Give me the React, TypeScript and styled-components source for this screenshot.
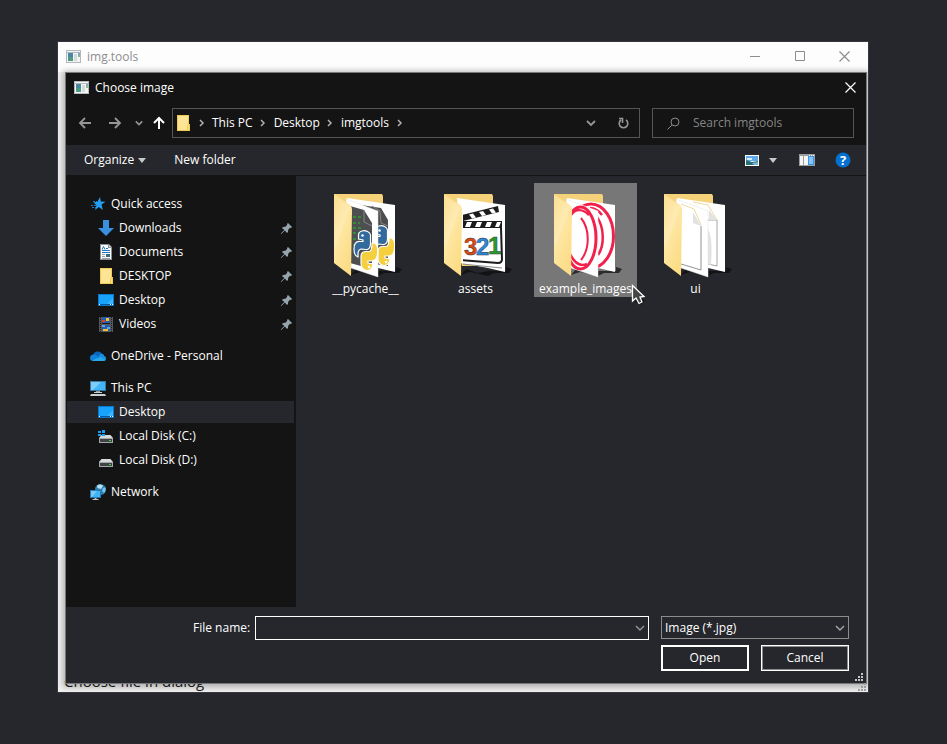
import React from "react";
import styled, { createGlobalStyle } from "styled-components";

const Global = createGlobalStyle`
  * { box-sizing: border-box; }
  body { margin: 0; background: #26272c; }
  body, button, input, select {
    font-family: "Open Sans", "Noto Sans", sans-serif;
    font-size: 12px;
    line-height: 16px;
  }
`;

const Page = styled.main`
  display: flex;
  min-height: 100vh;
  padding: 42px 79px 52px 58px;
`;

const Window = styled.section`
  position: relative;
  display: flex;
  flex-direction: column;
  flex: 1;
  min-width: 0;
  background: #f0f0f0;
  outline: 1px solid #393642;
  overflow: hidden;
`;

const WindowBar = styled.header`
  display: flex;
  align-items: flex-start;
  height: 30px;
  padding: 0 1px 0 8px;
  background: #fdfdfd;
  color: #8d8d8d;
  > svg { display: block; margin-top: 8px; }
`;

const WindowTitle = styled.h1`
  flex: 1;
  margin: 0 0 0 6px;
  font-size: 12px;
  line-height: 30px;
  font-weight: 400;
`;

const CaptionButton = styled.button`
  display: grid;
  place-items: center;
  width: 45px;
  height: 28px;
  padding: 0;
  border: 0;
  background: none;
  color: inherit;
`;

const WindowBody = styled.div`
  display: flex;
  flex: 1;
  align-items: flex-end;
  padding: 0 6px 1px;
  color: #1b1b1b;
  p { margin: 0; font-size: 15px; line-height: 20px; }
`;

const WindowGrip = styled.span`
  position: absolute;
  right: 2px;
  bottom: 1px;
  color: #9c9c9c;
  svg { display: block; }
`;

const Dialog = styled.div`
  position: absolute;
  inset: 30px 1px 8px 7px;
  display: flex;
  flex-direction: column;
  border: 1px solid #77787a;
  background: #26272c;
  color: #fff;
  box-shadow: 0 1px 6px 2px rgba(0, 0, 0, 0.28);
`;

const DialogBar = styled.header`
  display: flex;
  align-items: center;
  height: 29px;
  padding: 0 1px 0 8px;
  background: #141414;
  h2 { flex: 1; margin: 0 0 0 6px; font-size: 12px; font-weight: 400; }
  svg { display: block; }
`;

const CloseButton = styled(CaptionButton)`
  width: 30px;
`;

const NavBar = styled.div`
  display: flex;
  align-items: center;
  height: 43px;
  padding: 0 12px 1px 11px;
  background: #141414;
`;

const NavButton = styled.button<{ $width: number; $before?: number; $color?: string }>`
  display: grid;
  place-items: center;
  place-content: center;
  flex: none;
  width: ${(p) => p.$width}px;
  height: 28px;
  margin-left: ${(p) => p.$before ?? 0}px;
  padding: 0;
  border: 0;
  background: none;
  color: ${(p) => p.$color ?? "#969696"};
`;

const Address = styled.nav`
  display: flex;
  align-items: center;
  flex: 1;
  height: 30px;
  margin: 0 12px 0 1px;
  padding-left: 2px;
  border: 1px solid #555;
`;

const Crumb = styled.button`
  padding: 0;
  border: 0;
  background: none;
  color: #fff;
  white-space: nowrap;
`;

const CrumbArrow = styled.span`
  display: grid;
  place-items: center;
  width: 21px;
  color: #b0b0b0;
`;

const Spacer = styled.span`
  flex: 1;
`;

const Search = styled.label`
  display: flex;
  align-items: center;
  gap: 13px;
  flex: none;
  width: 202px;
  height: 30px;
  padding-left: 14px;
  border: 1px solid #555;
  color: #8a8a8a;
  input {
    flex: 1;
    min-width: 0;
    padding: 0;
    border: 0;
    outline: 0;
    background: none;
    color: #fff;
  }
  input::placeholder { color: #858585; opacity: 1; }
`;

const Toolbar = styled.div`
  display: flex;
  align-items: center;
  height: 31px;
  padding: 0 15px 0 18px;
  border-bottom: 1px solid #141414;
`;

const ToolButton = styled.button<{ $gap?: number }>`
  display: flex;
  align-items: center;
  gap: 4px;
  margin-left: ${(p) => p.$gap ?? 0}px;
  padding: 0;
  border: 0;
  background: none;
  color: #fff;
  svg { display: block; }
`;

const Content = styled.div`
  display: flex;
  flex: 1;
  min-height: 0;
`;

const Sidebar = styled.nav`
  display: flex;
  flex-direction: column;
  gap: 10px;
  flex: none;
  width: 230px;
  padding: 17px 2px 0 1px;
  background: #141414;
`;

const Group = styled.div`
  display: flex;
  flex-direction: column;
  gap: 2px;
`;

const Place = styled.button<{ $nested?: boolean; $active?: boolean }>`
  display: flex;
  align-items: center;
  height: 22px;
  padding: 0 2px 0 ${(p) => (p.$nested ? 31 : 23)}px;
  border: 0;
  background: ${(p) => (p.$active ? "#26272c" : "none")};
  color: #fff;
  text-align: left;
  svg { display: block; flex: none; }
  span { flex: 1; margin-left: 5px; }
`;

const Files = styled.div`
  display: flex;
  flex-wrap: wrap;
  align-content: flex-start;
  gap: 7px;
  flex: 1;
  padding: 7px 18px;
`;

const Tile = styled.button<{ $active?: boolean }>`
  position: relative;
  display: flex;
  flex-direction: column;
  align-items: center;
  width: 103px;
  height: 114px;
  padding: 10px 0 0;
  border: 0;
  background: ${(p) => (p.$active ? "#777777" : "none")};
  color: #fff;
  > svg { display: block; margin: 0 0 2px 4px; }
`;

const Cursor = styled.span`
  position: absolute;
  left: 97px;
  top: 101px;
  svg { display: block; }
`;

const Footer = styled.footer`
  position: relative;
  display: flex;
  flex-direction: column;
  gap: 5px;
  height: 76px;
  padding: 9px 17px 0 127px;
`;

const FooterRow = styled.div`
  display: flex;
  justify-content: flex-end;
  gap: 12px;
`;

const FileName = styled.label`
  display: flex;
  align-items: center;
  flex: 1;
  gap: 5px;
  white-space: nowrap;
`;

const FieldBox = styled.span<{ $color: string }>`
  display: flex;
  align-items: center;
  flex: 1;
  height: 24px;
  border: 1px solid ${(p) => p.$color};
  color: #a8a8a8;
  input {
    flex: 1;
    min-width: 0;
    border: 0;
    outline: 0;
    background: none;
    color: #fff;
  }
`;

const TypeBox = styled.span`
  display: grid;
  align-items: center;
  flex: none;
  width: 188px;
  height: 23px;
  border: 1px solid #8c8c8c;
  color: #a8a8a8;
  select {
    grid-area: 1 / 1;
    width: 100%;
    padding: 0 20px 0 3px;
    border: 0;
    outline: 0;
    appearance: none;
    background: none;
    color: #fff;
  }
  svg { grid-area: 1 / 1; justify-self: end; margin-right: 3px; pointer-events: none; }
`;

const ActionButton = styled.button<{ $primary?: boolean }>`
  width: 88px;
  height: 26px;
  padding: 0;
  border: ${(p) => (p.$primary ? "2px solid #fff" : "1px solid #fff")};
  box-shadow: ${(p) => (p.$primary ? "none" : "inset 0 0 0 1px #8c8c8c")};
  background: #26272c;
  color: #fff;
`;

const Grip = styled.span`
  position: absolute;
  right: 3px;
  bottom: 2px;
  color: #c4c4c4;
  svg { display: block; }
`;

const AppIcon = () => (
  <svg width="15" height="13" viewBox="0 0 15 13">
    <path fill="#b5b9bd" d="M0 0h15v13H0z" />
    <path fill="#f3f5f5" d="M1 1h13v1H1zM1 3h13v9H1z" />
    <path fill="#4a87a5" d="M2 3h5v4H2z" />
    <path fill="#4d9b83" d="M2 7h5v4H2z" />
    <path fill="#d7dadd" d="M8 4h3v7H8z" />
    <path fill="#7fa7cf" d="M12 3h2v2h-2z" />
    <path fill="#86bb9a" d="M12 5h2v2h-2z" />
  </svg>
);

const Cross = () => (
  <svg width="11" height="11" viewBox="0 0 11 11" fill="none" stroke="currentColor" strokeWidth="1.200">
    <path d="M.5.5l10 10M10.5.5l-10 10" />
  </svg>
);

const Chevron = ({ size = 10, weight = 1.4 }: { size?: number; weight?: number }) => (
  <svg width={size} height={size} viewBox="0 0 10 10" fill="none" stroke="currentColor" strokeWidth={weight}>
    <path d="M1 3l4 4 4-4" />
  </svg>
);

const Arrow = ({ d, strokeWidth = 1.8 }: { d: string; strokeWidth?: number }) => (
  <svg width="14" height="14" viewBox="0 0 14 14" fill="none" stroke="currentColor" strokeWidth={strokeWidth}>
    <path d={d} />
  </svg>
);

const Separator = () => (
  <CrumbArrow>
    <svg width="6" height="8" viewBox="0 0 6 8" fill="none" stroke="currentColor" strokeWidth="1.5">
      <path d="M1 1l3 3-3 3" />
    </svg>
  </CrumbArrow>
);

const Triangle = () => (
  <svg width="8" height="5" viewBox="0 0 8 5">
    <path fill="#c8c8c8" d="M0 0h8L4 5z" />
  </svg>
);

const GripDots = () => (
  <svg width="8" height="8" viewBox="0 0 8 8" fill="currentColor">
    <path d="M6 0h2v2H6zM3 3h2v2H3zM6 3h2v2H6zM0 6h2v2H0zM3 6h2v2H3zM6 6h2v2H6z" />
  </svg>
);

const SmallFolder = () => (
  <svg width="16" height="16" viewBox="0 0 16 16">
    <path fill="#f0cb52" d="M2 0h12v9h1v7H2z" />
    <path fill="#ffe496" d="M3 1h10v9h-1v5H3z" />
    <path fill="#ffdc70" d="M13 10h1v5h-1z" />
  </svg>
);

const Pin = () => (
  <svg width="11" height="11" viewBox="0 0 11 11">
    <path fill="#94a3ac" d="M7 0l4 4-1 1-1-.2L7.200 6.700 7 9 6 10 3.800 7.600.6 10.800 0 10.900l.1-.6 3.200-3.200L1 5l1-1 2.300-.2L6.200 2 6 1z" />
  </svg>
);

const QuickIcon = () => (
  <svg width="16" height="14" viewBox="0 0 16 14">
    <path fill="#23a0f5" d="M10 0l.8 4.500 4.700.2-3.900 2.900 1.200 5.400-4-3L5 13l1.500-4.800L3.500 5.500l4-.8z" />
    <path stroke="#1477c4" strokeDasharray="2 1" d="M3 4.500h4M1 8.500h5M2 10.500h4" />
  </svg>
);

const DownIcon = () => (
  <svg width="16" height="16" viewBox="0 0 16 16">
    <path fill="#3a90df" d="M5 0h6v8h5l-8 8-8-8h5z" />
  </svg>
);

const DocIcon = () => (
  <svg width="16" height="16" viewBox="0 0 16 16">
    <path fill="#8c9196" d="M2 0h9l3 3v13H2z" />
    <path fill="#fbfbfb" d="M3 1h7v3h3v11H3z" />
    <path fill="#d5d8da" d="M11 1l2 2h-2z" />
    <path fill="none" stroke="#2277bd" d="M4 5.500l1.500-3L7 5.500M8 4.500h2M4 6.500h8M4 8.500h8" />
    <path fill="#346d84" d="M8 10h4v3H8z" />
    <path stroke="#9aa0a5" d="M4 10.500h3M4 12.500h3M4 14.500h8" />
  </svg>
);

const DesktopIcon = () => (
  <svg width="16" height="14" viewBox="0 0 16 14">
    <path fill="#0b78cc" d="M0 1h16v12H0z" />
    <path fill="#17a3fb" d="M1 2h14v9H1z" />
    <path fill="#3fb4fc" d="M15 5v6H9z" />
    <path fill="#07579a" d="M1 11h14v1H1z" />
    <path fill="#eef8ff" d="M1 11h1v1H1zM12 11h1v1h-1zM14 11h1v1h-1z" />
  </svg>
);

const VideoIcon = () => (
  <svg width="16" height="16" viewBox="0 0 16 16">
    <path fill="#57595c" d="M1 1h14v15H1z" />
    <path stroke="#1b1b1b" strokeWidth="1" strokeDasharray="1 1" d="M2.500 1v15M13.500 1v15" />
    <path fill="#2b5aa8" d="M4 1h8v6H4zM4 9h8v6H4z" />
    <path fill="#f2c22d" d="M8 2h3v3H8zM5 13h5v2H5z" />
    <path fill="#d4452f" d="M4 4h3v2H4z" />
    <path fill="#58a8f0" d="M4 9h3v2H4zM9 11h3v2H9z" />
    <path fill="#1b1b1b" d="M4 7h8v1H4z" />
  </svg>
);

const CloudIcon = () => (
  <svg width="16" height="12" viewBox="0 0 16 12">
    <path fill="#0a66b8" d="M3 5a5 4.500 0 0 1 9-1.500L10 9H2z" />
    <path fill="#0f83da" d="M0 8a3.500 3.500 0 0 1 4-3.500c4 0 4 4 6 4l-7 2.500A3 3 0 0 1 0 8z" />
    <path fill="#1490df" d="M9 6c1-3 5-3 5 0 2 .2 2.500 2 1.800 3.500L9 8z" />
    <path fill="#28a8ea" d="M2 10.500L9.500 7l6.300 2.500c-.4 1-1.300 1.500-2.300 1.500H3.500z" />
  </svg>
);

const PcIcon = () => (
  <svg width="16" height="15" viewBox="0 0 16 15">
    <path fill="#3779a8" d="M0 0h16v10H0z" />
    <path fill="#43b5f7" d="M1 1h14v8H1z" />
    <path fill="#7dcdfb" d="M1 1h10L3 9H1z" />
    <path fill="#8d9ba4" d="M6 10h4v1H6z" />
    <path fill="#c9d0d4" d="M4 11h8v1H4zM1 13h14l1 2H0z" />
  </svg>
);

const DiskIcon = ({ system }: { system?: boolean }) => (
  <svg width="16" height="14" viewBox="0 0 16 14">
    <path fill="#d8dadb" d="M3.500 6h9L15 9H1z" />
    <path fill="#a6a9ab" d="M1 9h14v5H1z" />
    <path fill="#404244" d="M2 10h12v3H2z" />
    <path fill="#3fd24c" d="M11 11h2v1h-2z" />
    {system && <path fill="#18a0f4" d="M0 2h3v2H0zM4 1h3v3H4zM0 5h3v2H0zM4 5h3v2H4z" />}
  </svg>
);

const NetworkIcon = () => (
  <svg width="16" height="16" viewBox="0 0 16 16">
    <circle cx="10.500" cy="5.500" r="5.500" fill="#2f7fae" />
    <path fill="#b9e0f2" d="M7 1.500c2-1.500 5-1 6 .5L11 5 7.500 4z" />
    <path fill="#7cc2e6" d="M13 4l2.500-.5c.5 2 0 4-1.500 5.500L12 7z" />
    <path fill="#237cba" d="M0 6h11v8H0z" />
    <path fill="#42b3f5" d="M1 7h9v6H1z" />
    <path fill="#79cafa" d="M1 7h6l-5 6H1z" />
    <path fill="#b8c2c8" d="M4.500 14h2v1h2v1h-6v-1h2z" />
  </svg>
);

type Art = "python" | "clapper" | "rings" | "pages";

const PythonMark = () => (
  <g stroke="#fff" strokeWidth="1.200">
    <path fill="#326a9c" d="M8 0c4-1 8 1 8.500 4v9c0 4-2 6-5 5.500L8 18c-3 0-4 2-4 5v3c-4-1-4-5-4-8 0-5 2-8 6-7.500h3V9L4.500 8V4c0-2 1.500-3.500 3.500-4z" />
    <path fill="#f6cf3e" d="M18 12h2c4 1 4 6 3.500 11s-3 7-6 7H14v2l5 1c0 4-3 7-6 6.500-4-.5-6-3-6-7v-7c0-3 2-5 5-5h3c2 0 3-3 3-8.500z" />
    <circle cx="8.500" cy="4.500" r="1.300" fill="#fff" stroke="none" />
    <circle cx="15" cy="36" r="1.300" fill="#fff" stroke="none" />
  </g>
);

const FolderArt = ({ art }: { art: Art }) => {
  const id = `folder-${art}`;
  return (
    <svg width="72" height="86" viewBox="0 0 72 86">
      <defs>
        <linearGradient id={`${id}-flap`} x1="0" y1="0" x2="0.600" y2="1">
          <stop offset="0" stopColor="#fbd878" />
          <stop offset="0.500" stopColor="#fee7a4" />
          <stop offset="1" stopColor="#fcdc85" />
        </linearGradient>
        <clipPath id={`${id}-back`}>
          <path d="M21 6l42 6v67l-17-4-25-2z" />
        </clipPath>
        <clipPath id={`${id}-front`}>
          <path d="M14 6l32 12v66l-27-9z" />
        </clipPath>
      </defs>
      <path fill="#0b0b0d" opacity=".7" d="M19 82l5-6 12 4 10-2 18 0 0-4 6 2-3 4-15 0-6 3-18-4z" />
      <path fill="#f5d27a" d="M2 1h48l1 2v70H20z" />
      <path fill="#fff" d="M15 5l48 7v67l-17-4-27-5z" />
      {art === "clapper" ? (
        <g>
          <g clipPath={`url(#${id}-back)`}>
            <path fill="#fff" stroke="#1c1c1c" strokeWidth="2" d="M19 32h38q2 0 2 3l1 31q0 4-4 4l-37-3z" />
            <path fill="#1c1c1c" d="M19 28h41v7H19zM20 22l36-9 1 6-36 9z" />
            <path fill="#fff" d="M25 29h5l-2 5h-5zM35 29h5l-2 5h-5zM45 29h5l-2 5h-5zM55 29h4l-2 5h-4zM27 21.500l4-1 3 4-4 1zM37 19l4-1 3 4-4 1zM47 16.500l4-1 3 4-4 1z" />
            <g fontFamily="Liberation Sans Narrow, Liberation Sans, sans-serif" fontWeight="700" fontSize="24" stroke="#333" strokeWidth=".4">
              <text x="22" y="62" fill="#de4b12">3</text>
              <text x="34" y="62" fill="#2b88df">2</text>
              <text x="46" y="61" fill="#289a2b">1</text>
            </g>
            <path stroke="#888" d="M20 71l40 4" />
          </g>
        </g>
      ) : (
        <>
          <g clipPath={`url(#${id}-back)`}>
            {art === "python" && (
              <>
                <path fill="#4d4e50" d="M29 12l20 3 7 12v46l-14-2z" />
                <path fill="none" stroke="#858585" d="M40 13l8 5 1 12 7 3" />
                <g transform="translate(39 33)"><PythonMark /></g>
              </>
            )}
            {art === "rings" && (
              <>
                <ellipse cx="39" cy="43" rx="22.500" ry="32" fill="none" stroke="#f1214c" strokeWidth="3" />
                <path fill="none" stroke="#f1214c" strokeWidth="2.500" d="M38 15c5 0 9 3 12 7M45 24c7 10 8 28 1 38" />
              </>
            )}
            {art === "pages" && (
              <>
                <path fill="none" stroke="#8f8f8f" strokeWidth=".8" d="M46 27h9v46l-9-2" />
                <path fill="none" stroke="#f0d8a0" d="M31 9l15 3 9 15" />
                <path fill="#e2e2e2" d="M47 17l8 10h-8zM46 36c4 8 4 20 3 36l-3-1z" />
              </>
            )}
          </g>
          <path fill="#fff" stroke="#e0e0e0" strokeWidth=".5" d="M14 6l32 12v66l-27-9z" />
          <g clipPath={`url(#${id}-front)`}>
            {art === "python" && (
              <>
                <path fill="#4d4e50" d="M18 13l14 4 8 13v46l-22-6z" />
                <path fill="none" stroke="#858585" d="M32 17v12l8 4" />
                <path stroke="#2ca12f" strokeWidth="1.500" strokeDasharray="3 2" d="M21 24h9M21 30h7M21 35h9M21 40h6M21 46h5M21 52h4" />
              </>
            )}
            {art === "rings" && (
              <>
                <ellipse cx="28.500" cy="45" rx="15.500" ry="31" fill="none" stroke="#f1214c" strokeWidth="3" />
                <path fill="none" stroke="#f1214c" strokeWidth="2" d="M29 25c9 11 9 31 0 42" />
                <path fill="none" stroke="#f1214c" strokeWidth="2.500" d="M19 22c5-7 12-6 18 0M18 61c4 8 10 13 17 10" />
              </>
            )}
            {art === "pages" && (
              <>
                <path fill="none" stroke="#777" strokeWidth=".8" d="M39 33v44l-20-6" />
                <path fill="none" stroke="#f0d8a0" d="M19 11l13 5 7 16" />
                <path fill="#e2e2e2" d="M31 19l8 14-8-3z" />
              </>
            )}
          </g>
          {art === "python" && <g transform="translate(22 38)"><PythonMark /></g>}
        </>
      )}
      <path fill={`url(#${id}-flap)`} d="M2 1l16 11q2 2 2 4l-1 67L2 70z" />
      <path fill="#fff" opacity=".18" d="M2 1l16 13L4 52l-2 1z" />
    </svg>
  );
};

const Pointer = () => (
  <svg width="18" height="23" viewBox="0 0 18 23">
    <path fill="#111" opacity=".8" d="M4 6l10 11-4 4-3-4-3 2z" />
    <path fill="#444" stroke="#fff" strokeWidth="1.300" d="M1.500 1.500v15.500l3.500-3 3 5.500 3-1.500-2-5 4-.5z" />
  </svg>
);

type PlaceItem = { name: string; icon: React.ReactNode; nested?: boolean; pinned?: boolean; active?: boolean };

const places: PlaceItem[][] = [
  [
    { name: "Quick access", icon: <QuickIcon /> },
    { name: "Downloads", icon: <DownIcon />, nested: true, pinned: true },
    { name: "Documents", icon: <DocIcon />, nested: true, pinned: true },
    { name: "DESKTOP", icon: <SmallFolder />, nested: true, pinned: true },
    { name: "Desktop", icon: <DesktopIcon />, nested: true, pinned: true },
    { name: "Videos", icon: <VideoIcon />, nested: true, pinned: true },
  ],
  [{ name: "OneDrive - Personal", icon: <CloudIcon /> }],
  [
    { name: "This PC", icon: <PcIcon /> },
    { name: "Desktop", icon: <DesktopIcon />, nested: true, active: true },
    { name: "Local Disk (C:)", icon: <DiskIcon system />, nested: true },
    { name: "Local Disk (D:)", icon: <DiskIcon />, nested: true },
  ],
  [{ name: "Network", icon: <NetworkIcon /> }],
];

const folders: { name: string; art: Art; active?: boolean }[] = [
  { name: "__pycache__", art: "python" },
  { name: "assets", art: "clapper" },
  { name: "example_images", art: "rings", active: true },
  { name: "ui", art: "pages" },
];

export default function App() {
  return (
    <Page>
      <Global />
      <Window>
        <WindowBar>
          <AppIcon />
          <WindowTitle>img.tools</WindowTitle>
          <CaptionButton aria-label="Minimize">
            <svg width="10" height="10" viewBox="0 0 10 10"><path fill="currentColor" d="M0 5h10v1H0z" /></svg>
          </CaptionButton>
          <CaptionButton aria-label="Maximize">
            <svg width="10" height="10" viewBox="0 0 10 10"><path fill="none" stroke="currentColor" d="M.5.5h9v9h-9z" /></svg>
          </CaptionButton>
          <CaptionButton aria-label="Close window"><Cross /></CaptionButton>
        </WindowBar>
        <WindowBody><p>Choose file in dialog</p></WindowBody>
        <Dialog role="dialog" aria-labelledby="dialog-title">
          <DialogBar>
            <AppIcon />
            <h2 id="dialog-title">Choose image</h2>
            <CloseButton aria-label="Close"><Cross /></CloseButton>
          </DialogBar>
          <NavBar>
            <NavButton $width={16} aria-label="Back"><Arrow d="M13 7H2M7 2L2 7l5 5" /></NavButton>
            <NavButton $width={44} aria-label="Forward"><Arrow d="M1 7h11M7 2l5 5-5 5" /></NavButton>
            <NavButton $width={4} aria-label="Recent locations"><Chevron size={8} weight={2} /></NavButton>
            <NavButton $width={24} $before={6} $color="#fff" aria-label="Up"><Arrow strokeWidth={2} d="M7 13V2M2 7l5-5 5 5" /></NavButton>
            <Address aria-label="Address">
              <SmallFolder />
              <Separator />
              <Crumb>This PC</Crumb>
              <Separator />
              <Crumb>Desktop</Crumb>
              <Separator />
              <Crumb>imgtools</Crumb>
              <Separator />
              <Spacer />
              <NavButton $width={32} aria-label="Previous locations"><Chevron weight={1.8} /></NavButton>
              <NavButton $width={32} aria-label="Refresh">
                <svg width="11" height="12" viewBox="0 0 11 12" fill="none" stroke="currentColor" strokeWidth="1.600">
                  <path d="M8 3a4.300 4.300 0 1 1-5 0M1 1.500h3.500V6" />
                </svg>
              </NavButton>
            </Address>
            <Search>
              <svg width="13" height="13" viewBox="0 0 13 13" fill="none" stroke="currentColor">
                <circle cx="8" cy="5" r="4" /><path d="M5 8L.5 12.500" />
              </svg>
              <input type="search" aria-label="Search imgtools" placeholder="Search imgtools" />
            </Search>
          </NavBar>
          <Toolbar>
            <ToolButton>Organize <Triangle /></ToolButton>
            <ToolButton $gap={28}>New folder</ToolButton>
            <Spacer />
            <ToolButton aria-label="View">
              <svg width="14" height="11" viewBox="0 0 14 11">
                <path fill="#fff" d="M0 0h14v11H0z" />
                <path fill="#62a9e9" d="M1 1h12v5H1z" />
                <path fill="#d5ecfa" d="M2 3h5v2H2z" />
                <path fill="#277179" d="M1 5l6 2 6-1v4H1z" />
                <path fill="#7cb5d8" d="M7 8l6-1v3H9z" />
              </svg>
            </ToolButton>
            <ToolButton $gap={10} aria-label="More views"><Triangle /></ToolButton>
            <ToolButton $gap={22} aria-label="Preview pane">
              <svg width="16" height="12" viewBox="0 0 16 12">
                <path fill="#9b9da1" d="M0 0h16v12H0z" />
                <path fill="#f5f5f5" d="M1 2h3v9H1zM5 2h4v9H5z" />
                <path fill="#3694e9" d="M9 2h6v9H9z" />
                <path fill="#86c3f8" d="M10 3h4v7h-4z" />
                <path fill="#fff" d="M10 1h1v1h-1zM12 1h1v1h-1zM14 1h1v1h-1z" />
              </svg>
            </ToolButton>
            <ToolButton $gap={20} aria-label="Help">
              <svg width="16" height="16" viewBox="0 0 16 16">
                <circle cx="8" cy="8" r="7.500" fill="#0470d2" />
                <text x="8" y="12.500" textAnchor="middle" fill="#fff" fontSize="13" fontWeight="700" fontFamily="Open Sans, sans-serif">?</text>
              </svg>
            </ToolButton>
          </Toolbar>
          <Content>
            <Sidebar aria-label="Places">
              {places.map((group) => (
                <Group key={group[0].name}>
                  {group.map((p) => (
                    <Place key={p.name} $nested={p.nested} $active={p.active}>
                      {p.icon}
                      <span>{p.name}</span>
                      {p.pinned && <Pin />}
                    </Place>
                  ))}
                </Group>
              ))}
            </Sidebar>
            <Files>
              {folders.map((f) => (
                <Tile key={f.name} $active={f.active}>
                  <FolderArt art={f.art} />
                  {f.name}
                  {f.active && <Cursor><Pointer /></Cursor>}
                </Tile>
              ))}
            </Files>
          </Content>
          <Footer>
            <FooterRow>
              <FileName>
                File name:
                <FieldBox $color="#fff">
                  <input type="text" />
                  <NavButton as="span" $width={17}><Chevron /></NavButton>
                </FieldBox>
              </FileName>
              <TypeBox>
                <select aria-label="File type"><option>Image (*.jpg)</option></select>
                <Chevron />
              </TypeBox>
            </FooterRow>
            <FooterRow>
              <ActionButton $primary>Open</ActionButton>
              <ActionButton>Cancel</ActionButton>
            </FooterRow>
            <Grip><GripDots /></Grip>
          </Footer>
        </Dialog>
        <WindowGrip><GripDots /></WindowGrip>
      </Window>
    </Page>
  );
}
